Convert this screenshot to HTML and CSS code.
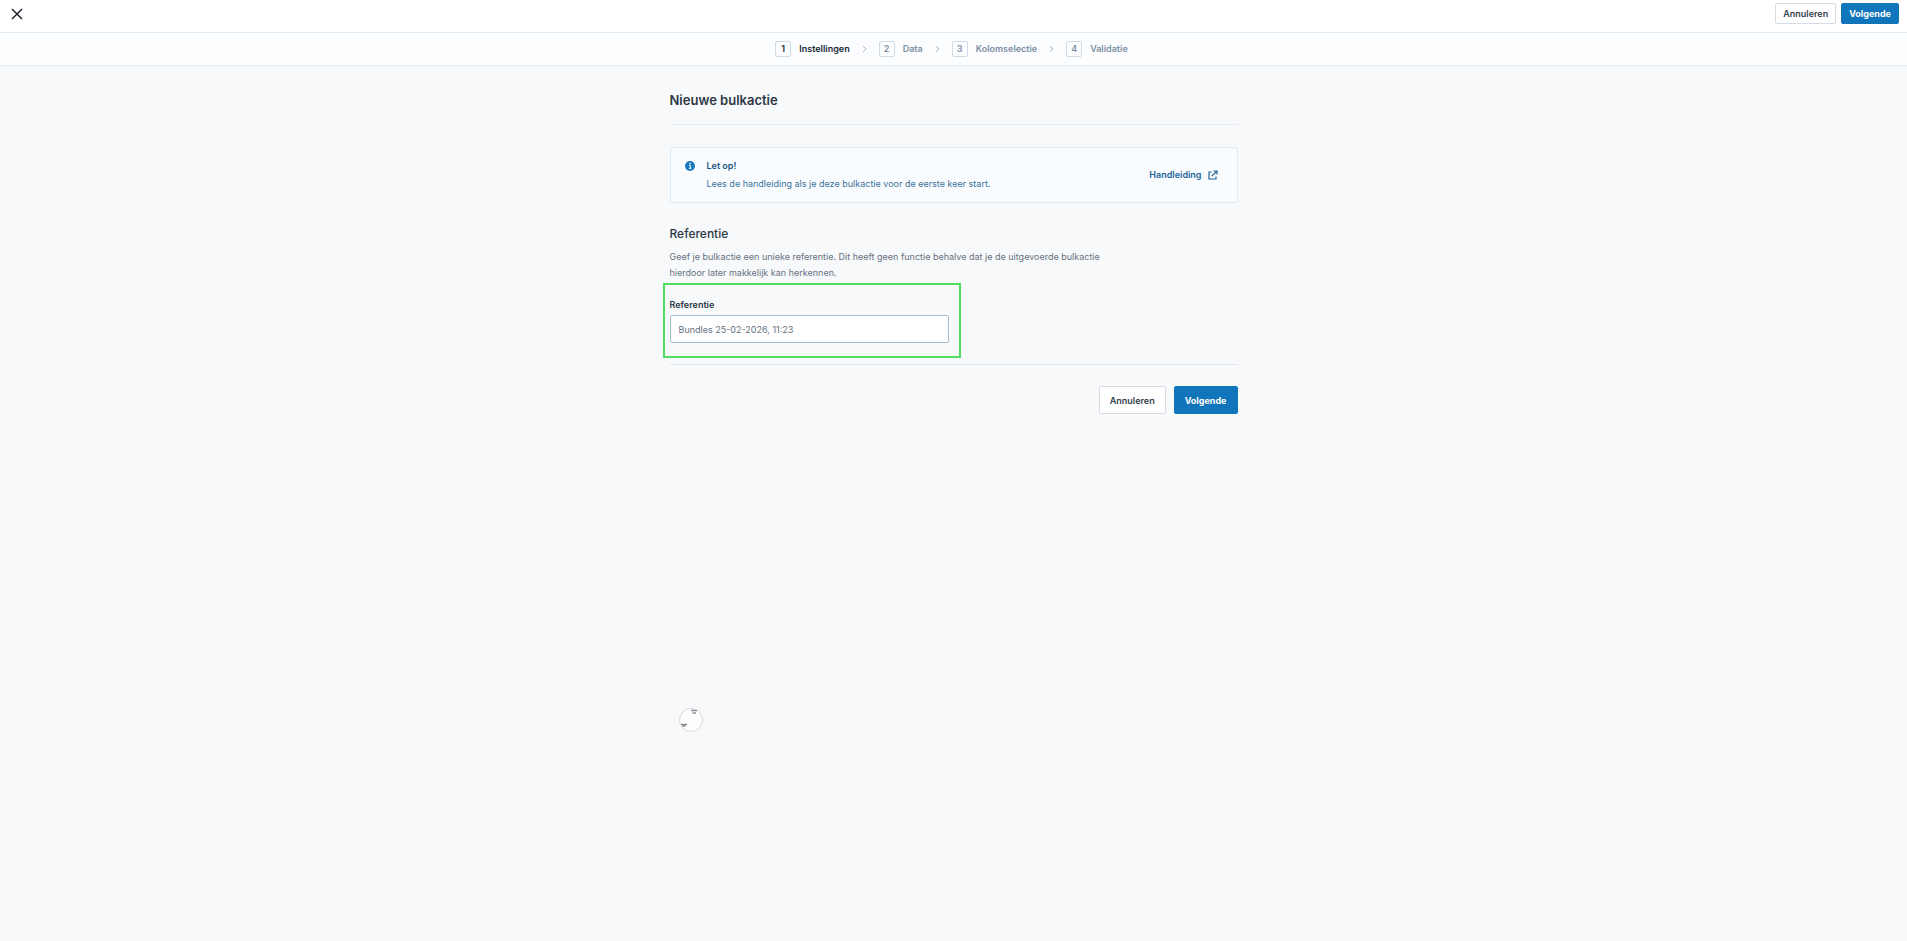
FILE: index.html
```html
<!DOCTYPE html>
<html lang="nl">
<head>
    <meta charset="UTF-8">
    <meta name="viewport" content="width=device-width, initial-scale=1.0">
    <title>Nieuwe bulkactie</title>
    <link rel="stylesheet" href="styles.css">
</head>
<body>
    <header class="topbar">
        <button type="button" class="close" aria-label="Sluiten">
            <svg width="12" height="12" viewBox="0 0 12 12" fill="none" stroke="currentColor" stroke-width="1.5"><path d="M1 1l10 10M11 1L1 11"/></svg>
        </button>
        <div class="topbar-actions">
            <button type="button" class="btn btn-small">Annuleren</button>
            <button type="button" class="btn btn-small btn-primary">Volgende</button>
        </div>
    </header>

    <nav class="steps">
        <div class="step active"><span class="step-number">1</span>Instellingen</div>
        <svg class="chevron" width="5" height="8" viewBox="0 0 5 8"><path d="M1 1l3 3-3 3"/></svg>
        <div class="step"><span class="step-number">2</span>Data</div>
        <svg class="chevron" width="5" height="8" viewBox="0 0 5 8"><path d="M1 1l3 3-3 3"/></svg>
        <div class="step"><span class="step-number">3</span>Kolomselectie</div>
        <svg class="chevron" width="5" height="8" viewBox="0 0 5 8"><path d="M1 1l3 3-3 3"/></svg>
        <div class="step"><span class="step-number">4</span>Validatie</div>
    </nav>

    <main class="content">
        <h1>Nieuwe bulkactie</h1>

        <div class="notice">
            <svg class="notice-icon" width="10" height="10" viewBox="0 0 10 10"><circle cx="5" cy="5" r="5" fill="#1a7abf"/><path d="M4 4.4h1.3v3M3.9 7.4h2.4" stroke="#fff" fill="none"/><circle cx="5" cy="2.5" r=".8" fill="#fff"/></svg>
            <div class="notice-text">
                <strong>Let op!</strong>
                <p>Lees de handleiding als je deze bulkactie voor de eerste keer start.</p>
            </div>
            <a class="notice-link" href="#">
                Handleiding
                <svg width="10" height="10" viewBox="0 0 10 10" fill="none" stroke="currentColor" stroke-width="1.2"><path d="M3.6 2H1v7h7V6.4M3.8 6.2L9 1M5.5 1H9v3.5"/></svg>
            </a>
        </div>

        <form>
            <h2>Referentie</h2>
            <p class="help">Geef je bulkactie een unieke referentie. Dit heeft geen functie behalve dat je de uitgevoerde bulkactie hierdoor later makkelijk kan herkennen.</p>
            <div class="field">
                <label for="reference">Referentie</label>
                <input type="text" id="reference" value="Bundles 25-02-2026, 11:23">
            </div>
            <div class="form-actions">
                <button type="button" class="btn">Annuleren</button>
                <button type="submit" class="btn btn-primary">Volgende</button>
            </div>
        </form>

        <svg class="spinner" width="24" height="24" viewBox="0 0 24 24">
            <circle cx="12" cy="12" r="11.5" fill="#fdfdfe" stroke="#d8d9dc"/>
            <path d="M12 2.5h6M13.5 5h3.5M2 16.5h6M3.5 18h3" stroke="#8b8e93" stroke-width="1.5"/>
        </svg>
    </main>
</body>
</html>
```
FILE: styles.css
```css
* {
    box-sizing: border-box;
}
body {
    margin: 0;
    min-height: 100vh;
    background-color: #f8f9fb;
    color: #2c3846;
    font-family: Inter, "Liberation Sans", sans-serif;
    font-size: 9px;
    line-height: 16px;
}
h1, h2, p {
    margin: 0;
}
.topbar {
    display: flex;
    justify-content: space-between;
    align-items: flex-start;
    height: 33px;
    padding: 3px 8px 0;
    background-color: #fff;
    border-bottom: 1px solid #e4e7ec;
}
.close {
    display: flex;
    margin: 0;
    padding: 5px 3px;
    border: none;
    background: none;
    color: #20262d;
    cursor: pointer;
}
.topbar-actions {
    display: flex;
    gap: 5px;
}
.btn {
    height: 28px;
    padding: 0 10px;
    border: 1px solid #d5dbe3;
    border-radius: 2px;
    background-color: #fff;
    color: #35414e;
    font-family: inherit;
    font-size: 9px;
    font-weight: 600;
    cursor: pointer;
}
.btn-small {
    height: 21px;
    padding: 0 7px 1px;
}
.btn-primary {
    border-color: #1175bb;
    background-color: #1175bb;
    color: #fff;
    font-weight: 700;
}
.steps {
    display: flex;
    justify-content: center;
    align-items: center;
    gap: 12px;
    height: 33px;
    padding-right: 4px;
    background-color: #fbfdff;
    border-bottom: 1px solid #e4e7ec;
}
.step {
    display: flex;
    align-items: center;
    gap: 8px;
    color: #7f90a3;
    font-weight: 600;
}
.step.active {
    color: #202a35;
}
.step-number {
    width: 16px;
    height: 16px;
    border: 1px solid #d0dae5;
    border-radius: 2px;
    line-height: 14px;
    text-align: center;
}
.chevron {
    fill: none;
    stroke: #a9b5c2;
}
.content {
    width: 568px;
    max-width: 100%;
    margin: 0 auto;
    padding-top: 24px;
}
h1 {
    padding-bottom: 14px;
    border-bottom: 1px solid #e8ebef;
    font-size: 13px;
    font-weight: 600;
    line-height: 20px;
}
.notice {
    display: flex;
    align-items: center;
    margin: 22px 0 23px;
    padding: 9px 19px 9px 14px;
    border: 1px solid #dcedf8;
    border-radius: 2px;
    background-color: #f8fcff;
    color: #3d7399;
}
.notice-icon {
    align-self: flex-start;
    margin: 4px 12px 0 0;
}
.notice-text {
    flex: 1;
    line-height: 18px;
}
.notice-text strong {
    color: #1c5480;
    font-weight: 600;
}
.notice-link {
    display: flex;
    align-items: center;
    gap: 6px;
    color: #22659a;
    font-weight: 600;
    text-decoration: none;
}
h2 {
    margin-bottom: 7px;
    font-size: 12px;
    font-weight: 500;
    line-height: 16px;
}
.help {
    max-width: 460px;
    color: #667281;
}
.field {
    position: relative;
    width: 279px;
    padding-top: 16px;
    margin-bottom: 21px;
}
/* highlight around the field */
.field::before {
    content: "";
    position: absolute;
    inset: 2px -12px -15px -7px;
    border: 2px solid #4fdc63;
    pointer-events: none;
}
.field label {
    display: block;
    margin-bottom: 2px;
    font-weight: 600;
}
.field input {
    display: block;
    width: 100%;
    height: 28px;
    padding: 0 8px;
    border: 1px solid #a9bccf;
    border-radius: 2px;
    background-color: #fff;
    color: #667281;
    font-family: inherit;
    font-size: 9px;
}
.form-actions {
    display: flex;
    justify-content: flex-end;
    gap: 8px;
    padding-top: 21px;
    border-top: 1px solid #e4e7ec;
}
.spinner {
    display: block;
    margin: 294px 0 0 9px;
}
```
